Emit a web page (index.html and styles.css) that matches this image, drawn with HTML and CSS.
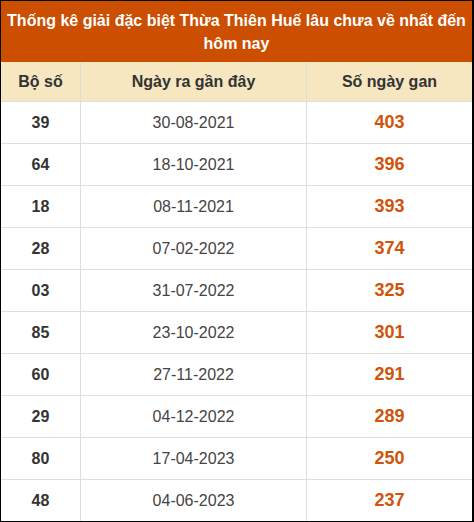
FILE: index.html
```html
<!DOCTYPE html>
<html lang="vi">
<head>
<meta charset="utf-8">
<link rel="stylesheet" href="styles.css">
</head>
<body>
<div class="frame">
  <div class="title">Thống kê giải đặc biệt Thừa Thiên Huế lâu chưa về nhất đến hôm nay</div>
  <table class="gan">
    <thead>
      <tr><th class="c1">Bộ số</th><th class="c2">Ngày ra gần đây</th><th class="c3">Số ngày gan</th></tr>
    </thead>
    <tbody>
      <tr><td class="num">39</td><td class="date">30-08-2021</td><td class="days">403</td></tr>
      <tr><td class="num">64</td><td class="date">18-10-2021</td><td class="days">396</td></tr>
      <tr><td class="num">18</td><td class="date">08-11-2021</td><td class="days">393</td></tr>
      <tr><td class="num">28</td><td class="date">07-02-2022</td><td class="days">374</td></tr>
      <tr><td class="num">03</td><td class="date">31-07-2022</td><td class="days">325</td></tr>
      <tr><td class="num">85</td><td class="date">23-10-2022</td><td class="days">301</td></tr>
      <tr><td class="num">60</td><td class="date">27-11-2022</td><td class="days">291</td></tr>
      <tr><td class="num">29</td><td class="date">04-12-2022</td><td class="days">289</td></tr>
      <tr><td class="num">80</td><td class="date">17-04-2023</td><td class="days">250</td></tr>
      <tr><td class="num">48</td><td class="date">04-06-2023</td><td class="days">237</td></tr>
    </tbody>
  </table>
</div>
</body>
</html>
```
FILE: styles.css
```css
html, body {
  margin: 0;
  padding: 0;
  background: #ffffff;
}
.frame {
  width: 474px;
  height: 522px;
  box-sizing: border-box;
  border-top: 1px solid #000;
  border-left: 1px solid #000;
  border-right: 2px solid #000;
  border-bottom: 1px solid #000;
  font-family: "Liberation Sans", Arial, sans-serif;
  overflow: hidden;
}
.title {
  background: #cc4e00;
  color: #ffffff;
  font-weight: bold;
  font-size: 16px;
  line-height: 23px;
  text-align: center;
  height: 61px;
  box-sizing: border-box;
  padding: 8px 2px 0;
}
.gan {
  width: 100%;
  border-collapse: collapse;
  table-layout: fixed;
}
.gan th, .gan td {
  border: 1px solid #dedede;
  text-align: center;
  padding: 0;
}
.gan tr > :first-child { border-left: none; }
.gan tr > :last-child { border-right: none; }
.gan thead th {
  border-top: none;
  background: #f6e7c1;
  color: #333333;
  font-size: 16px;
  font-weight: bold;
  height: 39px;
}
.gan tbody tr:last-child td { border-bottom: none; }
.c1 { width: 79px; }
.c2 { width: 225px; }
.gan td {
  height: 41px;
}
.num {
  font-weight: bold;
  font-size: 16px;
  color: #333333;
}
.date {
  font-size: 16px;
  color: #444444;
}
.days {
  font-weight: bold;
  font-size: 18px;
  color: #d0540a;
}
```
